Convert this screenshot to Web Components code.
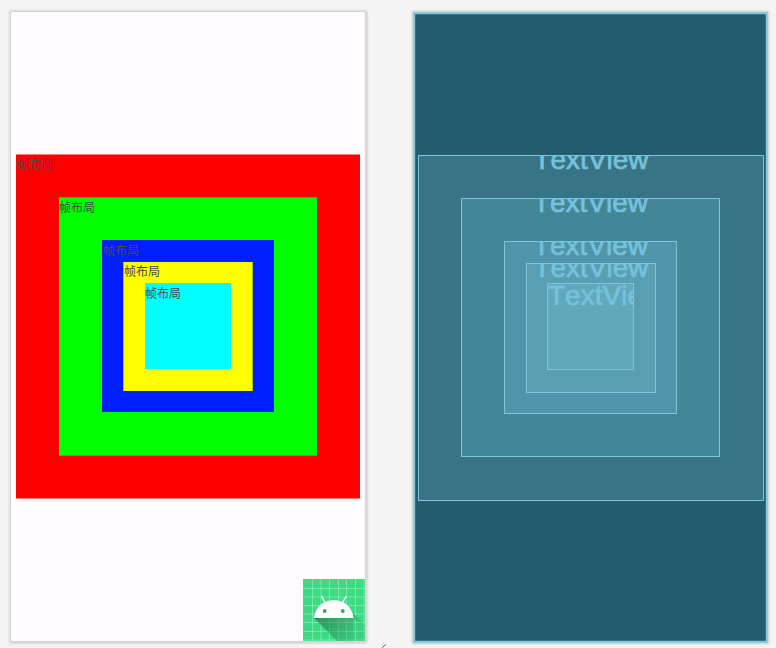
<!DOCTYPE html>
<html lang="zh"><head><meta charset="utf-8"><title>帧布局</title>
<style>html,body{margin:0;height:100%;background:#f4f4f4;overflow:hidden}</style></head>
<body><layout-editor></layout-editor>
<script>
const define=(name,html)=>customElements.define(name,class extends HTMLElement{
  constructor(){super();this.attachShadow({mode:'open'}).innerHTML=html;}
});
define('frame-layer',`<style>
:host{display:block;box-sizing:border-box;grid-area:1/1;place-self:center;overflow:hidden;white-space:nowrap;color:#494949;font:12px/17px "Noto Sans CJK SC",sans-serif}
span{display:block;padding:var(--pad,0)}
</style><span><slot></slot></span>`);
define('blueprint-layer',`<style>
:host{display:block;box-sizing:border-box;grid-area:1/1;place-self:center;overflow:hidden;border:1px solid #7ac6dc;white-space:nowrap;color:#75c2dc;font:28px/32px "Liberation Sans",Arial,sans-serif;font-kerning:none;-webkit-text-stroke:.7px #75c2dc}
span{display:flex;justify-content:var(--align,center);margin-top:var(--shift,-12px)}
</style><span><slot></slot></span>`);
define('android-icon',`<style>:host{display:block;grid-area:1/1;place-self:end;width:62px;height:62px}svg{display:block}</style>
<svg width="62" height="62" viewBox="0 0 62 62">
<rect width="62" height="62" fill="#3ddc84"/>
<path d="M9.5 0V62M18 0V62M26.5 0V62M35.5 0V62M43.5 0V62M52.5 0V62M61 0V62M0 9.5H62M0 18H62M0 26.5H62M0 35H62M0 43.5H62M0 52.5H62M0 61H62" stroke="#fff" stroke-opacity=".3"/>
<defs><linearGradient id="g" x1="12" y1="39" x2="44" y2="65" gradientUnits="userSpaceOnUse"><stop stop-color="#176d41" stop-opacity=".65"/><stop offset="1" stop-color="#269458" stop-opacity=".3"/></linearGradient></defs>
<path d="M11 39H50V34L60 43.5L50 39.5V62H34Z" fill="url(#g)"/>
<path d="M50 39.5L60 43.5L62 46V62H50Z" fill="#269458" opacity=".15"/>
<path d="M11 39C12 28 20 21.2 31 21.2S49 28 50.5 39Z" fill="#fff"/>
<path d="M18.7 17.5L22.3 24M43 17.5L39.3 24" stroke="#fff" stroke-width="1.5" stroke-linecap="round"/>
<circle cx="21.7" cy="32" r="1.9" fill="#30a866"/><circle cx="39.8" cy="32" r="1.9" fill="#30a866"/>
</svg>`);
define('design-surface',`<style>
:host{display:grid;width:354px;height:629px;background:#fffbff;box-shadow:0 0 0 1px #d4d4d4,0 0 2px 2px #ddd,1px 1px 2px 1px #bbb}
.r{width:344px;height:345px;background:#f00;border:solid #ff7d7f;border-width:1px 0;--pad:0 0 0 1px}
.g{width:258px;height:259px;background:#0f0;border:solid #4cab00;border-width:1px 0}
.b{width:172px;height:172px;background:#001eff;margin-bottom:1px;--pad:1px 0 0 1px}
.y{width:130px;height:129px;background:#ff0;border:solid #b1b42f;border-width:0 1px}
.c{width:86px;height:86px;background:#0ff;margin-bottom:1px;--pad:1px 0 0}
</style>
<frame-layer class="r">帧布局</frame-layer><frame-layer class="g">帧布局</frame-layer><frame-layer class="b">帧布局</frame-layer><frame-layer class="y">帧布局</frame-layer><frame-layer class="c">帧布局</frame-layer><android-icon></android-icon>`);
define('blueprint-surface',`<style>
:host{display:grid;box-sizing:border-box;width:355px;height:631px;background:#235c6f;border:2px solid #8ac9db;box-shadow:0 0 2px 1px #ccc,inset 0 0 0 .5px #458da2}
.r{width:346px;height:346px;background:#387485;margin:1px 0 0 1px}
.g{width:259px;height:259px;background:#438698}
.b{width:173px;height:173px;background:#4f94a8}
.y{width:130px;height:130px;background:#5a9eb1;margin:1px 0 0 1px}
.c{width:87px;height:87px;background:#61a8ba;margin-bottom:2px;--align:flex-start;--shift:-4px}
</style>
<blueprint-layer class="r">TextView</blueprint-layer><blueprint-layer class="g">TextView</blueprint-layer><blueprint-layer class="b">TextView</blueprint-layer><blueprint-layer class="y">TextView</blueprint-layer><blueprint-layer class="c">TextView</blueprint-layer>`);
define('layout-editor',`<style>
:host{display:grid;grid-template-columns:354px 1fr 355px;padding:12px 8px 0 11px;box-sizing:border-box;height:648px;grid-template-rows:631px 5px}
.h{align-self:end;justify-self:start;margin-left:17px;grid-row:2;grid-column:2;display:block}
blueprint-surface{grid-column:3;grid-row:1}
</style><design-surface></design-surface><blueprint-surface></blueprint-surface>
<svg class="h" width="4" height="4"><path d="M.3 3.7L3.5.5" stroke="#555" fill="none"/></svg>`);
</script></body></html>
